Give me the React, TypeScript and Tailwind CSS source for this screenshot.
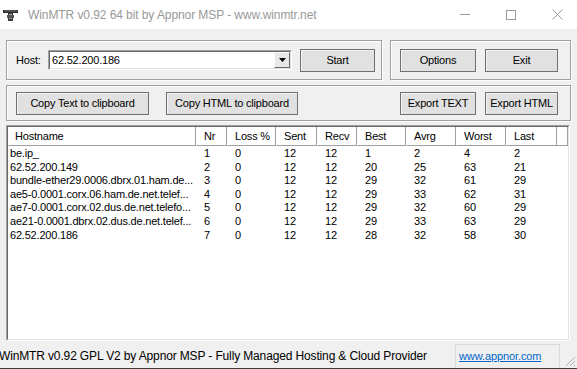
import React from "react";

const rows: (string | number)[][] = [
  ["be.ip_", 1, 0, 12, 12, 1, 2, 4, 2],
  ["62.52.200.149", 2, 0, 12, 12, 20, 25, 63, 21],
  ["bundle-ether29.0006.dbrx.01.ham.de...", 3, 0, 12, 12, 29, 32, 61, 29],
  ["ae5-0.0001.corx.06.ham.de.net.telef...", 4, 0, 12, 12, 29, 33, 62, 31],
  ["ae7-0.0001.corx.02.dus.de.net.telefo...", 5, 0, 12, 12, 29, 32, 60, 29],
  ["ae21-0.0001.dbrx.02.dus.de.net.telef...", 6, 0, 12, 12, 29, 33, 63, 29],
  ["62.52.200.186", 7, 0, 12, 12, 28, 32, 58, 30],
];

const headers = ["Hostname", "Nr", "Loss %", "Sent", "Recv", "Best", "Avrg", "Worst", "Last"];

const GRID = "grid grid-cols-[188px_31px_49px_41px_40px_49px_50px_50px_51px_1fr]";

function Btn({ w, children }: { w: string; children: React.ReactNode }) {
  return (
    <div
      className={`${w} h-[23px] shrink-0 flex items-center justify-center border border-[#707070] bg-[#e1e1e1] shadow-[inset_1px_1px_0_#f4f4f4] text-[11px] tracking-[-0.2px] text-black`}
    >
      {children}
    </div>
  );
}

function Group({ className, children }: { className: string; children: React.ReactNode }) {
  return (
    <div
      className={`${className} border border-[#a0a0a0] shadow-[inset_1px_1px_0_#ffffff,1px_1px_0_#ffffff] flex items-center`}
    >
      {children}
    </div>
  );
}

export default function App() {
  return (
    <div className="w-[577px] h-[369px] overflow-hidden bg-[#f0f0f0] flex flex-col font-['Liberation_Sans',Arial,sans-serif] text-black">
      {/* Title bar */}
      <div className="h-[29px] shrink-0 bg-white flex items-center overflow-hidden">
        <div className="w-[442px] shrink-0 flex items-center">
          <svg width="15" height="11" viewBox="0 0 15 11" className="ml-[3px] mt-[1px]">
            <rect x="0" y="0" width="15" height="3" fill="#2a2a2a" />
            <rect x="1" y="0.5" width="13" height="1" fill="#777" />
            <rect x="5" y="3" width="5" height="8" fill="#3a3a3a" />
            <rect x="4" y="5" width="7" height="3" fill="#555" />
            <rect x="6" y="4" width="3" height="1" fill="#aaa" />
            <rect x="6" y="8" width="3" height="1" fill="#999" />
          </svg>
          <span className="ml-[10px] text-[12px] tracking-[-0.08px] text-[#999999] whitespace-nowrap">
            WinMTR v0.92 64 bit by Appnor MSP - www.winmtr.net
          </span>
        </div>
        <div className="w-[46px] h-[29px] shrink-0 flex items-center justify-center">
          <div className="w-[10px] h-px bg-[#999]" />
        </div>
        <div className="w-[46px] h-[29px] shrink-0 flex items-center justify-center">
          <div className="w-[10px] h-[10px] border border-[#999]" />
        </div>
        <div className="w-[46px] h-[29px] shrink-0 flex items-center justify-center">
          <svg width="11" height="11" viewBox="0 0 11 11">
            <path d="M0.5 0.5L10.5 10.5M10.5 0.5L0.5 10.5" stroke="#999" strokeWidth="1" />
          </svg>
        </div>
      </div>

      <div className="px-[6px] flex flex-col">
        {/* Row 1 */}
        <div className="mt-[11px] flex gap-[8px]">
          <Group className="w-[376px] h-[40px] pl-[9px]">
            <span className="text-[11px] tracking-[-0.2px] w-[32px]">Host:</span>
            <div className="w-[244px] h-[20px] flex border border-t-[#a0a0a0] border-l-[#a0a0a0] border-r-white border-b-white">
              <div className="flex-1 flex items-center bg-white border border-t-[#696969] border-l-[#696969] border-r-[#e3e3e3] border-b-[#e3e3e3]">
                <span className="pl-[2px] flex-1 text-[11px] tracking-[-0.2px]">62.52.200.186</span>
                <div className="w-[16px] h-[16px] flex items-center justify-center bg-[#e8e8e8] border border-t-[#fafafa] border-l-[#fafafa] border-r-[#696969] border-b-[#696969]">
                  <svg width="7" height="4" viewBox="0 0 7 4">
                    <path d="M0 0H7L3.5 4Z" fill="#000" />
                  </svg>
                </div>
              </div>
            </div>
            <div className="ml-[8px]">
              <Btn w="w-[75px]">Start</Btn>
            </div>
          </Group>
          <Group className="w-[181px] h-[40px] pl-[9px] gap-[9px]">
            <Btn w="w-[76px]">Options</Btn>
            <Btn w="w-[73px]">Exit</Btn>
          </Group>
        </div>

        {/* Row 2 */}
        <div className="mt-[5px]">
          <Group className="w-[565px] h-[36px] pl-[9px]">
            <Btn w="w-[133px]">Copy Text to clipboard</Btn>
            <div className="ml-[17px]">
              <Btn w="w-[132px]">Copy HTML to clipboard</Btn>
            </div>
            <div className="ml-[102px]">
              <Btn w="w-[76px]">Export TEXT</Btn>
            </div>
            <div className="ml-[9px]">
              <Btn w="w-[73px]">Export HTML</Btn>
            </div>
          </Group>
        </div>

        {/* List view */}
        <div className="mt-[4px] w-[564px] h-[216px] flex border border-t-[#a0a0a0] border-l-[#a0a0a0] border-r-white border-b-white">
          <div className="flex-1 bg-white border border-t-[#696969] border-l-[#696969] border-r-[#e3e3e3] border-b-[#e3e3e3] flex flex-col text-[11px] tracking-[-0.2px]">
            <div className={`${GRID} h-[19px] shrink-0`}>
              {headers.map((h, i) => (
                <div
                  key={h}
                  className={`flex items-center border-r border-b border-r-[#a0a0a0] border-b-[#a0a0a0] border-l border-l-white ${i === 0 ? "pl-[6px]" : "pl-[7px]"} whitespace-nowrap`}
                >
                  {h}
                </div>
              ))}
              <div className="border-b border-b-[#a0a0a0] border-r border-r-[#a0a0a0]" />
            </div>
            <div className="pt-[1px] flex flex-col">
              {rows.map((r, ri) => (
                <div key={ri} className={`${GRID} h-[13.6px] leading-[13.6px]`}>
                  {r.map((c, ci) => (
                    <div key={ci} className={`${ci === 0 ? "pl-[2px]" : "pl-[8px]"} whitespace-nowrap`}>
                      {c}
                    </div>
                  ))}
                  <div />
                </div>
              ))}
            </div>
          </div>
        </div>
      </div>

      {/* Status bar */}
      <div className="mt-[3px] h-[24px] shrink-0 flex items-stretch">
        <div className="w-[455px] shrink-0 flex items-center">
          <span className="ml-[-1px] text-[12px] tracking-[-0.14px] whitespace-nowrap">
            WinMTR v0.92 GPL V2 by Appnor MSP - Fully Managed Hosting &amp; Cloud Provider
          </span>
        </div>
        <div className="w-[105px] shrink-0 flex items-center border-l border-t border-[#d9d9d9] border-r">
          <span className="ml-[3px] text-[11px] tracking-[-0.1px] text-[#0066cc] underline whitespace-nowrap">www.appnor.com</span>
        </div>
        <div className="flex-1 flex items-end justify-end pr-[1px] pb-[1px]">
          <svg width="12" height="12" viewBox="0 0 12 12">
            <path d="M11 2L2 11M11 6L6 11M11 10L10 11" stroke="#b0b0b0" strokeWidth="1" />
          </svg>
        </div>
      </div>
      <div className="h-px bg-[#3c3c3c] shrink-0" />
    </div>
  );
}
